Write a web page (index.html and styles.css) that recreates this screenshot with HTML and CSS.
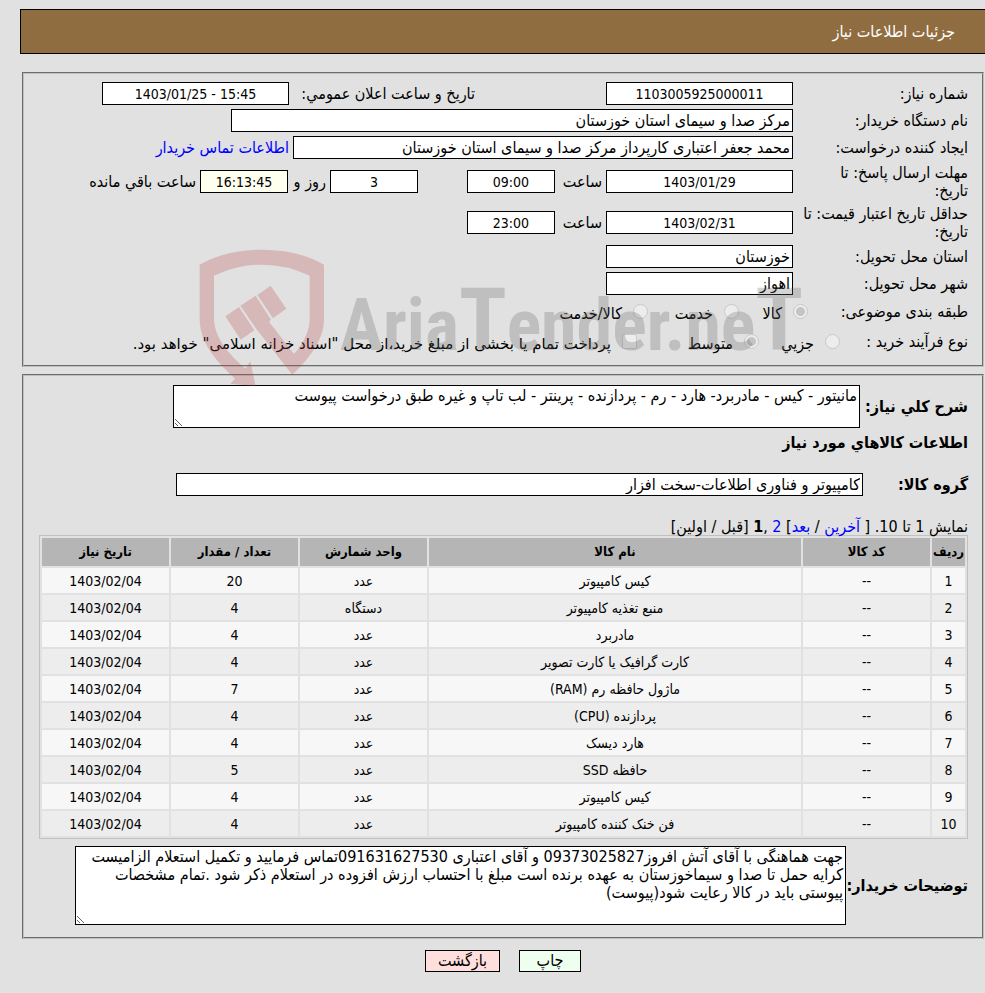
FILE: index.html
```html
<!DOCTYPE html>
<html lang="fa" dir="rtl">
<head>
<meta charset="utf-8">
<title>جزئیات اطلاعات نیاز</title>
<link rel="stylesheet" href="styles.css">
</head>
<body>
<header class="title-bar"><h1>جزئیات اطلاعات نیاز</h1></header>
<main>
<fieldset class="panel summary">
  <div class="row">
    <label class="name" for="no">شماره نیاز:</label>
    <input id="no" class="field wide center" readonly value="1103005925000011">
    <label class="name announce" for="pub">تاریخ و ساعت اعلان عمومي:</label>
    <input id="pub" class="field wide center" dir="ltr" readonly value="1403/01/25 - 15:45">
  </div>
  <div class="row">
    <label class="name" for="org">نام دستگاه خریدار:</label>
    <input id="org" class="field org" readonly value="مرکز صدا و سیمای استان خوزستان">
  </div>
  <div class="row">
    <label class="name" for="creator">ایجاد کننده درخواست:</label>
    <input id="creator" class="field creator" readonly value="محمد جعفر اعتباری کارپرداز مرکز صدا و سیمای استان خوزستان">
    <a class="contact" href="#">اطلاعات تماس خریدار</a>
  </div>
  <div class="row tall">
    <label class="name" for="due">مهلت ارسال پاسخ: تا<br>تاریخ:</label>
    <input id="due" class="field wide center" readonly value="1403/01/29">
    <label class="hour" for="due-h">ساعت</label>
    <input id="due-h" class="field short center" readonly value="09:00">
    <input id="days" class="field short center days" readonly value="3" aria-label="روز">
    <label class="and" for="days">روز و</label>
    <input id="left" class="field short center timer" readonly value="16:13:45">
    <label class="remain" for="left">ساعت باقي مانده</label>
  </div>
  <div class="row tall">
    <label class="name" for="valid">حداقل تاریخ اعتبار قیمت: تا<br>تاریخ:</label>
    <input id="valid" class="field wide center" readonly value="1403/02/31">
    <label class="hour" for="valid-h">ساعت</label>
    <input id="valid-h" class="field short center" readonly value="23:00">
  </div>
  <div class="row">
    <label class="name" for="prov">استان محل تحویل:</label>
    <input id="prov" class="field wide" readonly value="خوزستان">
  </div>
  <div class="row">
    <label class="name" for="city">شهر محل تحویل:</label>
    <input id="city" class="field wide" readonly value="اهواز">
  </div>
  <div class="row choice" role="radiogroup">
    <span class="name subject">طبقه بندی موضوعی:</span>
    <label class="opt o1"><input type="radio" name="kind" disabled checked>کالا</label>
    <label class="opt o2"><input type="radio" name="kind" disabled>خدمت</label>
    <label class="opt"><input type="radio" name="kind" disabled>کالا/خدمت</label>
  </div>
  <div class="row choice" role="radiogroup">
    <span class="name process">نوع فرآیند خرید :</span>
    <label class="opt p1"><input type="radio" name="proc" disabled>جزیي</label>
    <label class="opt p2"><input type="radio" name="proc" disabled checked>متوسط</label>
    <label class="opt pay"><input type="checkbox" disabled>پرداخت تمام یا بخشی از مبلغ خرید،از محل "اسناد خزانه اسلامی" خواهد بود.</label>
  </div>
</fieldset>

<fieldset class="panel goods">
  <div class="block">
    <label class="strong desc-name" for="desc">شرح کلي نیاز:</label>
    <textarea id="desc" class="field desc" readonly>مانیتور - کیس - مادربرد- هارد - رم - پردازنده - پرینتر - لب تاپ و غیره طبق درخواست پیوست</textarea>
  </div>
  <h2>اطلاعات کالاهاي مورد نیاز</h2>
  <div class="block group">
    <label class="strong group-name" for="grp">گروه کالا:</label>
    <input id="grp" class="field grp" readonly value="کامپیوتر و فناوری اطلاعات-سخت افزار">
  </div>
  <nav class="pager">نمایش 1 تا 10. [ <a href="#">آخرین</a> / <a href="#">بعد</a>] <a href="#">2</a> ,<b>1</b> [قبل / اولین]</nav>
  <table class="items">
    <colgroup><col class="c-row"><col class="c-std"><col><col class="c-std"><col class="c-std"><col class="c-std"></colgroup>
    <thead><tr><th>ردیف</th><th>کد کالا</th><th>نام کالا</th><th>واحد شمارش</th><th>تعداد / مقدار</th><th>تاریخ نیاز</th></tr></thead>
    <tbody>
    <tr><td>1</td><td>--</td><td>کیس کامپیوتر</td><td>عدد</td><td>20</td><td>1403/02/04</td></tr>
    <tr><td>2</td><td>--</td><td>منبع تغذیه کامپیوتر</td><td>دستگاه</td><td>4</td><td>1403/02/04</td></tr>
    <tr><td>3</td><td>--</td><td>مادربرد</td><td>عدد</td><td>4</td><td>1403/02/04</td></tr>
    <tr><td>4</td><td>--</td><td>کارت گرافیک یا کارت تصویر</td><td>عدد</td><td>4</td><td>1403/02/04</td></tr>
    <tr><td>5</td><td>--</td><td>ماژول حافظه رم (RAM)</td><td>عدد</td><td>7</td><td>1403/02/04</td></tr>
    <tr><td>6</td><td>--</td><td>پردازنده (CPU)</td><td>عدد</td><td>4</td><td>1403/02/04</td></tr>
    <tr><td>7</td><td>--</td><td>هارد دیسک</td><td>عدد</td><td>4</td><td>1403/02/04</td></tr>
    <tr><td>8</td><td>--</td><td>حافظه SSD</td><td>عدد</td><td>5</td><td>1403/02/04</td></tr>
    <tr><td>9</td><td>--</td><td>کیس کامپیوتر</td><td>عدد</td><td>4</td><td>1403/02/04</td></tr>
    <tr><td>10</td><td>--</td><td>فن خنک کننده کامپیوتر</td><td>عدد</td><td>4</td><td>1403/02/04</td></tr>
    </tbody>
  </table>
  <div class="block notes-block">
    <label class="strong notes-name" for="notes">توضیحات خریدار:</label>
    <textarea id="notes" class="field notes" readonly>جهت هماهنگی با آقای آتش افروز09373025827 و آقای اعتباری 091631627530تماس فرمایید و تکمیل استعلام الزامیست
کرایه حمل تا صدا و سیماخوزستان به عهده برنده است مبلغ با احتساب ارزش افزوده در استعلام ذکر شود .تمام مشخصات
پیوستی باید در کالا رعایت شود(پیوست)</textarea>
  </div>
</fieldset>
<div class="actions">
  <button type="button" class="btn print">چاپ</button>
  <button type="button" class="btn back">بازگشت</button>
</div>
</main>
<div class="watermark" dir="ltr" aria-hidden="true">
  <svg class="shield" viewBox="598 28 378 414">
    <path fill-rule="evenodd" d="M600 75Q680 30 787 30T973 75V240Q973 315 878 405L770 268L722 198L768 168L814 240L808 246L883 343Q930 290 930 235V108Q860 75 787 75T643 108V235C643 295 690 345 737 387L752 365L768 440L692 432L706 417C640 355 600 305 600 235Z"/>
    <path d="M677 230L718 202L764 272L723 300ZM773 166L813 138L860 207L820 236Z"/>
  </svg>
  <span class="brand">Aria<span class="big">T</span>ender.ne<span class="big">T</span></span>
</div>
</body>
</html>
```
FILE: styles.css
```css
* { box-sizing: border-box; }
body {
  position: relative;
  margin: 0;
  padding: 9px 0 22px 0;
  background: #e1e1e1;
  color: #000;
  font: 16px/18px "DejaVu Sans Condensed", "DejaVu Sans", sans-serif;
}
a { color: #00f; text-decoration: none; }
input, textarea, button { font: inherit; color: inherit; }

.title-bar {
  display: flex;
  align-items: center;
  height: 45px;
  margin-left: 20px;
  padding-right: 30px;
  background: #8f6d40;
  border: 1px solid #000;
  border-right: 0;
  color: #fff;
}
h1 { margin: 0; font-size: 16px; font-weight: normal; }

main { padding: 18px 1px 0 22px; }
.panel { margin: 0 0 7px; padding: 6px 14px 8px; border: 2px groove #c0c0c0; min-width: 0; }
.field {
  flex: none;
  height: 23px;
  margin: 0;
  padding: 1px 2px;
  background: #fff;
  border: 1px solid #000;
  border-radius: 0;
  outline: 0;
}
.center { text-align: center; font-size: 14px; }
.row { display: flex; align-items: center; height: 27px; white-space: nowrap; }
.tall { height: 41px; }
.name { flex: none; width: 175px; }
.wide { width: 187px; }
.short { width: 88px; }
.org { width: 562px; }
.creator { width: 500px; }
.announce { width: 186px; margin-right: 131px; }
.contact { margin-right: 4px; }
.hour, .and { flex: none; width: 51px; padding-right: 4px; }
.and { width: 42px; }
.days { margin-right: 49px; }
.timer { background: #fffff0; }
.remain { margin-right: 4px; }

.choice { height: 30px; }
.choice .subject { width: 160px; }
.choice .process { width: 128px; }
.opt { display: flex; flex: none; align-items: center; gap: 11px; padding-top: 3px; }
.opt input {
  appearance: none;
  flex: none;
  width: 15px;
  height: 15px;
  margin: 0 0 4px;
  border: 1px solid #c8c8c8;
  border-radius: 50%;
  background: #ededed;
}
.opt input:checked { background: radial-gradient(circle, #c4c4c4 4px, #ededed 5px); }
.opt input[type="checkbox"] { border-radius: 2px; }
.o1 { width: 69px; }
.o2 { width: 91px; }
.p1 { width: 81px; }
.p2 { width: 122px; }
.pay { font-family: "DejaVu Sans", sans-serif; font-size: 15px; }

.goods { padding: 9px 14px 12px; }
.block { display: flex; align-items: center; }
.strong { flex: none; font-weight: bold; white-space: nowrap; }
textarea.field { display: block; resize: both; overflow: hidden; }
.desc-name { width: 108px; }
.desc { width: 687px; height: 43px; }
h2 { margin: 6px 0 21px; font-size: 16px; line-height: 18px; font-weight: bold; }
.group-name { width: 105px; }
.grp { width: 687px; }
.pager { margin-top: 22px; line-height: 17px; }
.items {
  width: 929px;
  max-width: 100%;
  border: 1px solid #c0c0c0;
  border-spacing: 2px;
  table-layout: fixed;
  text-align: center;
  font-size: 14px;
}
.c-row { width: 33px; }
.c-std { width: 127px; }
.items th { height: 28px; padding: 0; background: #b5b5b5; font-size: 13px; }
.items td { height: 25px; padding: 0; background: #ededed; }
.items tbody tr:nth-child(odd) td { background: #f7f7f7; }
.notes-block { margin-top: 7px; }
.notes-name { width: 122px; }
.notes { width: 771px; height: 79px; white-space: pre; }
.actions { display: flex; justify-content: center; gap: 19px; padding-top: 4px; }
.btn { height: 22px; padding: 0; border: 1px solid #000; }
.print { width: 62px; background: #efffef; }
.back { width: 75px; background: #ffdede; }

.watermark {
  position: absolute;
  top: 249px;
  left: 199px;
  display: flex;
  gap: 15px;
  pointer-events: none;
}
.shield { width: 126px; height: 138px; fill: rgba(190, 70, 75, .26); }
.brand {
  font: bold 72px/154px "Liberation Sans Narrow", "Roboto Condensed", Roboto, sans-serif;
  color: rgba(100, 100, 100, .27);
}
.big { font-size: 88px; line-height: 1; }
```
